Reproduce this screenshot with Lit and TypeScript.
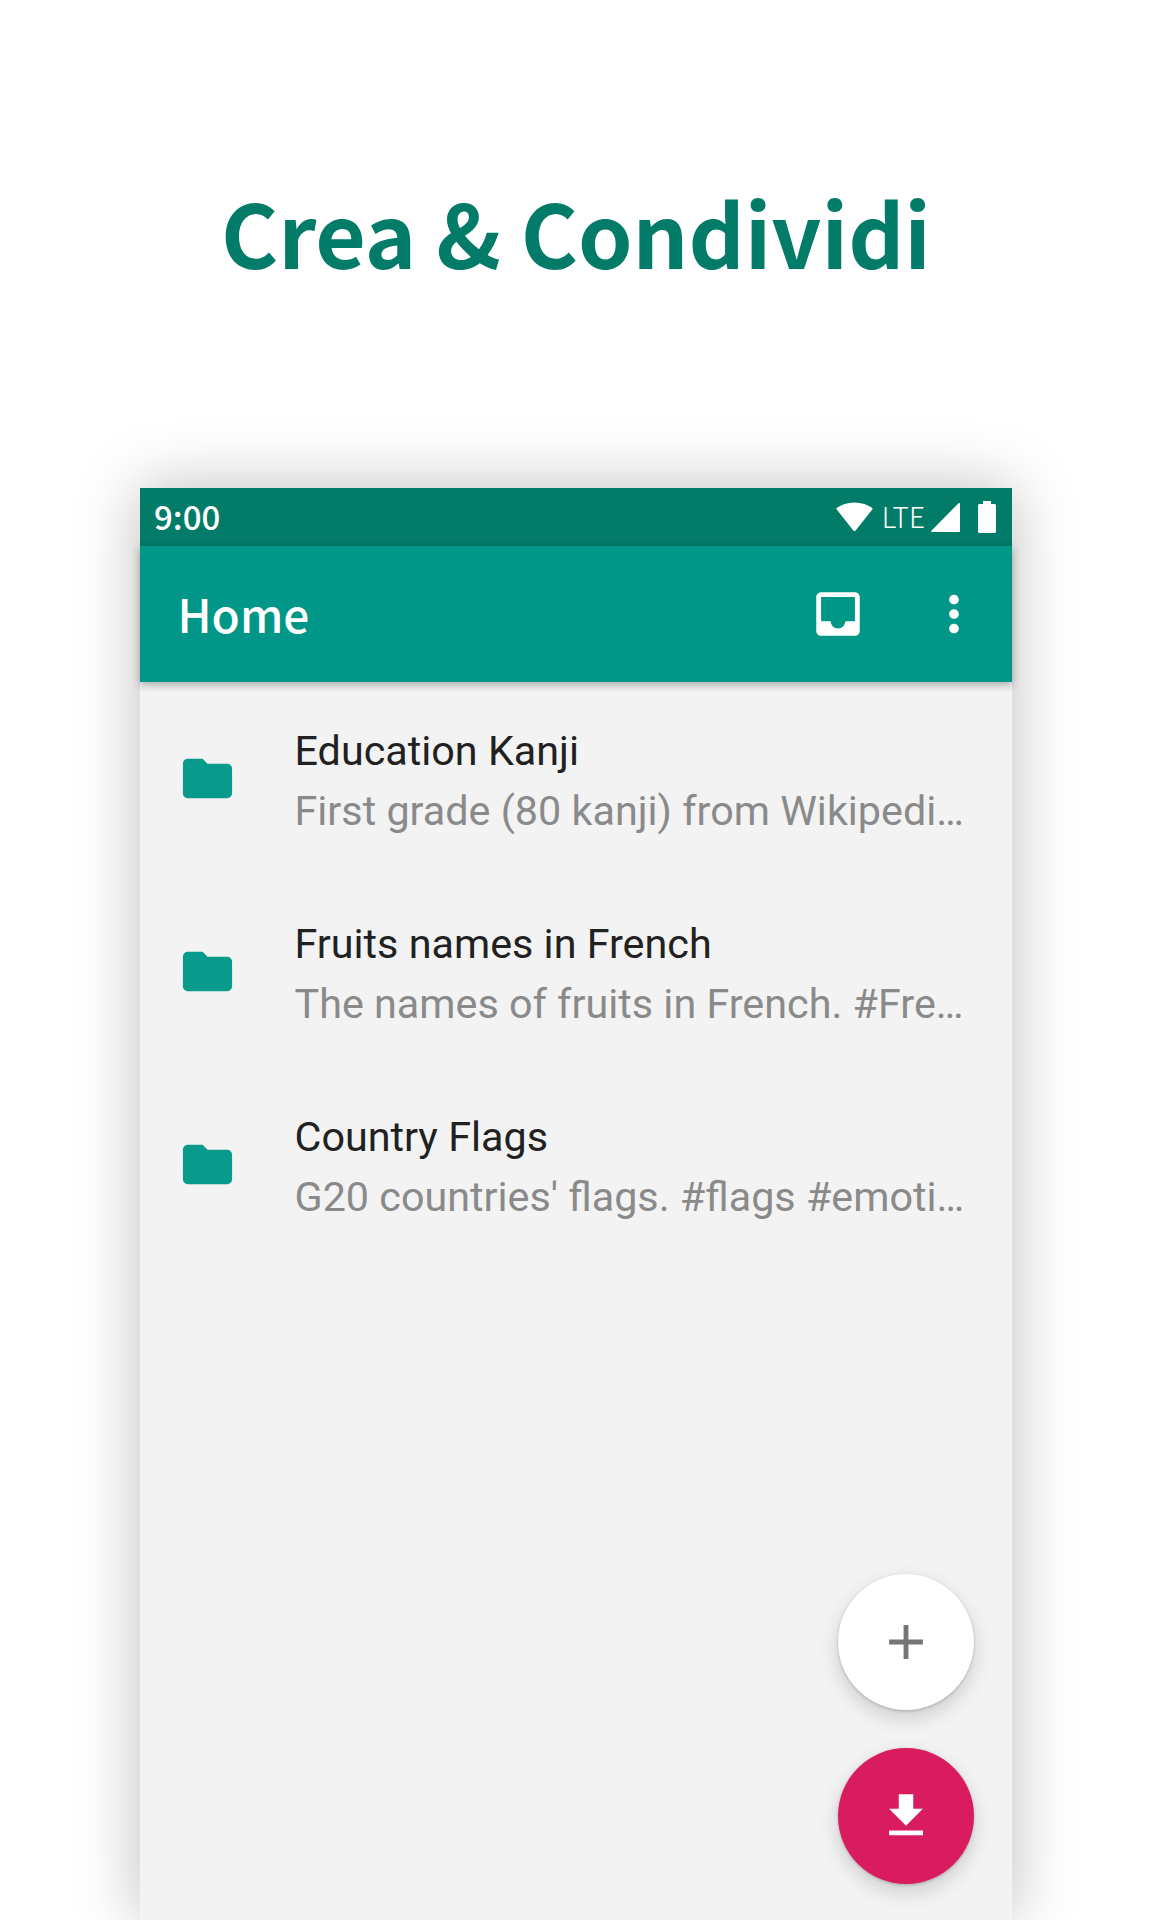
import { LitElement, html, css, svg } from "lit";
import { customElement } from "lit/decorators.js";

const icon = (d: string, cls: string) =>
  html`<svg class=${cls} viewBox="0 0 24 24" fill="currentColor">${svg`<path d=${d}></path>`}</svg>`;

const FOLDER = "M10 4H4c-1.1 0-1.99.9-1.99 2L2 18c0 1.1.9 2 2 2h16c1.1 0 2-.9 2-2V8c0-1.1-.9-2-2-2h-8l-2-2z";
const INBOX = "M19 3H5c-1.1 0-2 .9-2 2v14c0 1.1.9 2 2 2h14c1.1 0 2-.9 2-2V5c0-1.1-.9-2-2-2zm0 12h-4c0 1.66-1.35 3-3 3s-3-1.34-3-3H5V5h14v10z";
const MORE = "M12 8c1.1 0 2-.9 2-2s-.9-2-2-2-2 .9-2 2 .9 2 2 2zm0 2c-1.1 0-2 .9-2 2s.9 2 2 2 2-.9 2-2-.9-2-2-2zm0 6c-1.1 0-2 .9-2 2s.9 2 2 2 2-.9 2-2-.9-2-2-2z";
const PLUS = "M19 13h-6v6h-2v-6H5v-2h6V5h2v6h6v2z";
const DOWNLOAD = "M19 9h-4V3H9v6H5l7 7 7-7zM5 18v2h14v-2H5z";

const decks = [
  { title: "Education Kanji", sub: "First grade (80 kanji) from Wikipedia. #kanji #japanese" },
  { title: "Fruits names in French", sub: "The names of fruits in French. #French #fruits #language" },
  { title: "Country Flags", sub: "G20 countries' flags. #flags #emoticons #geography" },
];

@customElement("app-root")
export class AppRoot extends LitElement {
  static styles = css`
    :host {
      display: flex;
      flex-direction: column;
      width: 1152px;
      height: 1920px;
      overflow: hidden;
      background: #fff;
      font-family: Roboto, "Noto Sans", sans-serif;
    }
    .headline {
      margin: 0;
      height: 488px;
      padding-top: 174px;
      box-sizing: border-box;
      text-align: center;
      font-family: "Noto Sans CJK JP", "Noto Sans", sans-serif;
      font-size: 87.3px;
      line-height: 114px;
      font-weight: 700;
      color: #027b69;
    }
    .phone {
      position: relative;
      flex: 1;
      margin: 0 140px;
      background: #f3f3f3;
      box-shadow: 0 0 60px rgba(0, 0, 0, 0.26);
      display: flex;
      flex-direction: column;
      min-height: 0;
    }
    .status {
      height: 58px;
      background: #027b69;
      color: #fff;
      display: flex;
      align-items: center;
      padding: 0 16px 0 14px;
      flex: none;
      font-family: "Noto Sans CJK JP", "Noto Sans", sans-serif;
    }
    .time {
      font-size: 33px;
      line-height: 56px;
      padding-bottom: 2px;
      font-weight: 500;
      flex: 1;
    }
    .wifi { width: 37px; height: 30px; }
    .lte { font-size: 28px; line-height: 56px; padding-bottom: 2px; margin: 0 6px 0 9px; font-weight: 300; }
    .signal { width: 29px; height: 29px; margin-right: 18px; }
    .battery { width: 18px; height: 32px; }
    .bar {
      height: 136px;
      flex: none;
      background: #009788;
      color: #fff;
      display: flex;
      align-items: center;
      padding: 0 29px 0 37.500px;
      box-shadow: 0 3px 8px rgba(0, 0, 0, 0.3);
      position: relative;
    }
    .bar-title {
      flex: 1;
      font-family: "Noto Sans CJK JP", "Noto Sans", sans-serif;
      font-size: 46px;
      line-height: 134px;
      padding-bottom: 2px;
      font-weight: 500;
    }
    .bar-icon { width: 58px; height: 58px; display: block; }
    .bar-icons { display: flex; gap: 58px; }
    .row {
      height: 193px;
      display: flex;
      align-items: center;
      padding: 0 45px 0 38px;
    }
    .folder { width: 59px; height: 59px; color: #089a8b; flex: none; margin-right: 57.5px; }
    .text { min-width: 0; flex: 1; padding-top: 4px; }
    .title, .sub {
      font-size: 41.3px;
      line-height: 60px;
      white-space: nowrap;
      overflow: hidden;
      text-overflow: ellipsis;
    }
    .title { color: #212121; }
    .sub { color: #8a8a8a; }
    .fabs {
      position: absolute;
      right: 38.5px;
      bottom: 36px;
      display: flex;
      flex-direction: column;
      gap: 38px;
    }
    .fab {
      width: 136px;
      height: 136px;
      border-radius: 50%;
      display: flex;
      align-items: center;
      justify-content: center;
      box-shadow: 0 8px 20px rgba(0, 0, 0, 0.16), 0 1px 3px rgba(0, 0, 0, 0.2);
    }
    .fab svg { width: 58px; height: 58px; }
    .fab.add { background: #fff; color: #757575; }
    .fab.get { background: #d91c60; color: #fff; }
  `;

  render() {
    return html`
      <h1 class="headline">Crea &amp; Condividi</h1>
      <div class="phone">
        <div class="status">
          <span class="time">9:00</span>
          <svg class="wifi" viewBox="0 0 38 30" fill="#fff"><path d="M19 0C11.5 0 5.5 2.2 1 5.6c-.7.5-.7 1.2-.2 1.8L18 29c.5.6 1.500.6 2 0L37.2 7.4c.5-.6.5-1.3-.2-1.8C32.500 2.200 26.500 0 19 0z"></path></svg>
          <span class="lte">LTE</span>
          <svg class="signal" viewBox="0 0 29 29" fill="#fff"><path d="M28 0c.6 0 1 .4 1 1v27c0 .6-.4 1-1 1H1c-.8 0-1.100-.7-.6-1.300L27.300.4c.2-.2.4-.4.700-.4z"></path></svg>
          <svg class="battery" viewBox="0 0 18 32" fill="#fff"><path d="M5 0h8v3h3.500c.8 0 1.500.7 1.500 1.500V30.500c0 .8-.7 1.500-1.500 1.500H1.500C.7 32 0 31.300 0 30.500V4.500C0 3.700.7 3 1.500 3H5z"></path></svg>
        </div>
        <div class="bar">
          <span class="bar-title">Home</span>
          <div class="bar-icons">
            ${icon(INBOX, "bar-icon")}
            ${icon(MORE, "bar-icon")}
          </div>
        </div>
        ${decks.map(
          (d) => html`
            <div class="row">
              ${icon(FOLDER, "folder")}
              <div class="text">
                <div class="title">${d.title}</div>
                <div class="sub">${d.sub}</div>
              </div>
            </div>
          `
        )}
        <div class="fabs">
          <div class="fab add">${icon(PLUS, "")}</div>
          <div class="fab get">${icon(DOWNLOAD, "")}</div>
        </div>
      </div>
    `;
  }
}
